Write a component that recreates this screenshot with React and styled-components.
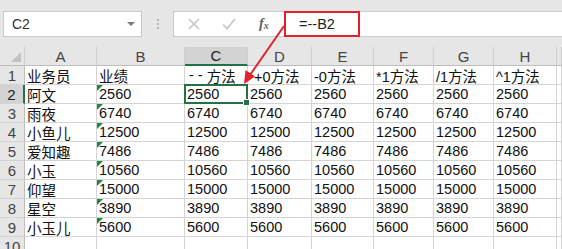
import React from 'react'
import styled, { createGlobalStyle, css } from 'styled-components'

const GlobalStyle = createGlobalStyle`
	body {
		margin: 0;
		background: #ffffff;
		font-family: 'Liberation Sans', 'Noto Sans CJK SC', sans-serif;
		overflow: hidden;
	}
`

const columns = ['A', 'B', 'C', 'D', 'E', 'F', 'G', 'H', '']
const widths = [25, 72, 88, 63, 64, 62, 60, 60, 63]

const people = [
	['阿文', '2560'],
	['雨夜', '6740'],
	['小鱼儿', '12500'],
	['爱知趣', '7486'],
	['小玉', '10560'],
	['仰望', '15000'],
	['星空', '3890'],
	['小玉儿', '5600'],
]

const App = () => {
	const headers = [
		'业务员',
		'业绩',
		<>
			{' '}
			<Dashes>--</Dashes>方法
		</>,
		' +0方法',
		'-0方法',
		'*1方法',
		'/1方法',
		'^1方法',
	]
	const rows = [headers, ...people.map(([name, n]) => [name, n, n, n, n, n, n, n])]

	return (
		<Page>
			<GlobalStyle />
			<Toolbar>
				<NameBox>
					<span>C2</span>
					<DropArrow />
				</NameBox>
				<Grip>
					<i />
					<i />
					<i />
				</Grip>
				<FormulaBar>
					<BarIcons>
						<svg width="12" height="12" viewBox="0 0 12 12">
							<path d="M1 1 L11 11 M11 1 L1 11" stroke="#c4c4c4" strokeWidth="1.6" fill="none" />
						</svg>
						<svg width="14" height="12" viewBox="0 0 14 12">
							<path d="M1 6.5 L5 10.5 L13 1" stroke="#c4c4c4" strokeWidth="1.6" fill="none" />
						</svg>
						<Fx>
							f<sub>x</sub>
						</Fx>
					</BarIcons>
					<FormulaText>=--B2</FormulaText>
				</FormulaBar>
			</Toolbar>

			<Sheet>
				<Corner>
					<svg width="10" height="10" viewBox="0 0 10 10">
						<path d="M10 0 L10 10 L0 10 Z" fill="#c2c2c2" />
					</svg>
				</Corner>
				{columns.map((c, i) => (
					<ColHead key={`col-${i}`} $active={c === 'C'}>
						{c}
					</ColHead>
				))}

				{rows.map((row, r) => (
					<React.Fragment key={`row-${r}`}>
						<RowHead $active={r === 1}>{r + 1}</RowHead>
						{row.map((val, c) => (
							<Cell key={`cell-${r}-${c}`} $flag={c === 1 && r > 0} $selected={c === 2 && r === 1}>
								{val}
							</Cell>
						))}
						<Cell />
					</React.Fragment>
				))}
				<RowHead>10</RowHead>
				{columns.map((c, i) => (
					<Cell key={`empty-${i}`} />
				))}
			</Sheet>

			<Arrow width="562" height="249" viewBox="0 0 562 249">
				<line x1="284" y1="26" x2="250" y2="75" stroke="#e5202a" strokeWidth="2" />
				<path d="M244 84 L245.5 70 L255 76.5 Z" fill="#e5202a" />
			</Arrow>
		</Page>
	)
}

const Page = styled.div`
	position: relative;
	width: 562px;
	height: 249px;
	overflow: hidden;
	background: #ffffff;
`

const Toolbar = styled.div`
	display: flex;
	align-items: flex-end;
	height: 47px;
	padding: 0 0 10px 3px;
	box-sizing: border-box;
	background: #e6e6e6;
`

const NameBox = styled.div`
	display: flex;
	align-items: center;
	justify-content: space-between;
	width: 139px;
	height: 26px;
	box-sizing: border-box;
	padding: 0 6px 0 8px;
	background: #ffffff;
	border: 1px solid #c9c9c9;
	font-size: 14px;
	color: #333;
`

const DropArrow = styled.span`
	width: 0;
	height: 0;
	border-left: 4px solid transparent;
	border-right: 4px solid transparent;
	border-top: 4px solid #7a7a7a;
`

const Grip = styled.div`
	display: flex;
	flex-direction: column;
	gap: 2px;
	width: 31px;
	height: 26px;
	align-items: center;
	justify-content: center;

	i {
		width: 2px;
		height: 2px;
		background: #b4b4b4;
	}
`

const FormulaBar = styled.div`
	flex: 1;
	display: flex;
	align-items: stretch;
	height: 26px;
	background: #ffffff;
	border: 1px solid #c9c9c9;
	border-right: none;
	box-sizing: border-box;
`

const BarIcons = styled.div`
	display: flex;
	align-items: center;
	gap: 22px;
	width: 110px;
	padding-left: 14px;
	box-sizing: border-box;
`

const Fx = styled.span`
	font-family: 'Liberation Serif', serif;
	font-style: italic;
	font-weight: bold;
	font-size: 14px;
	color: #606060;
	margin-left: 1px;

	sub {
		font-size: 10px;
		vertical-align: -1px;
	}
`

const FormulaText = styled.div`
	display: flex;
	align-items: center;
	width: 76px;
	margin: -1px 0;
	padding-left: 13px;
	box-sizing: border-box;
	border: 2px solid #e0202a;
	font-size: 14.5px;
	color: #222;
`

const Sheet = styled.div`
	display: grid;
	grid-template-columns: ${widths.map((w) => `${w}px`).join(' ')} 1fr;
	grid-auto-rows: 19px;
	font-size: 14.5px;
`

const Dashes = styled.span`
	letter-spacing: 4px;
	margin-left: 2px;
`

const headBase = css`
	display: flex;
	align-items: center;
	justify-content: center;
	box-sizing: border-box;
	background: #e6e6e6;
	color: #444;
	font-size: 15px;
	border-right: 1px solid #cfcfcf;
	border-bottom: 1px solid #bdbdbd;
`

const Corner = styled.div`
	${headBase};
	align-items: flex-end;
	justify-content: flex-end;
	padding: 0 3px 3px 0;
`

const ColHead = styled.div`
	${headBase};
	${({ $active }) =>
		$active &&
		css`
			background: #d3d3d3;
			color: #222;
			border-bottom: 2px solid #217346;
		`}
`

const RowHead = styled.div`
	${headBase};
	border-bottom: 1px solid #d4d4d4;
	border-right: 1px solid #bdbdbd;
	${({ $active }) =>
		$active &&
		css`
			background: #d3d3d3;
			color: #222;
			border-right: 2px solid #217346;
		`}
`

const Cell = styled.div`
	position: relative;
	display: flex;
	align-items: center;
	box-sizing: border-box;
	padding-left: 2px;
	white-space: pre;
	color: #111;
	border-right: 1px solid #d4d4d4;
	border-bottom: 1px solid #d4d4d4;

	${({ $flag }) =>
		$flag &&
		css`
			&::before {
				content: '';
				position: absolute;
				left: 0;
				top: 0;
				border-top: 6px solid #1e8a3c;
				border-right: 6px solid transparent;
			}
		`}

	${({ $selected }) =>
		$selected &&
		css`
			&::after {
				content: '';
				position: absolute;
				left: -1px;
				top: -1px;
				right: -1px;
				bottom: -1px;
				border: 2px solid #217346;
				z-index: 1;
			}

			&::before {
				content: '';
				position: absolute;
				right: -3px;
				bottom: -3px;
				width: 5px;
				height: 5px;
				background: #217346;
				border: 1px solid #ffffff;
				z-index: 2;
			}
		`}
`

const Arrow = styled.svg`
	position: absolute;
	left: 0;
	top: 0;
	pointer-events: none;
`

export default App
